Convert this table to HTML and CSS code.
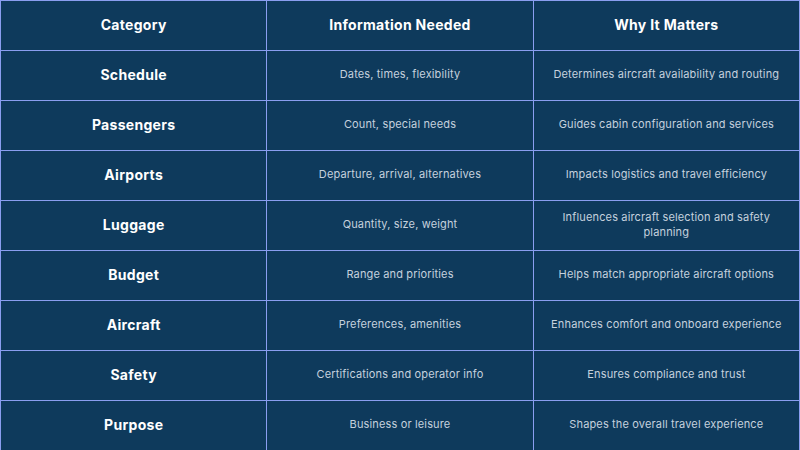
FILE: index.html
```html
<!DOCTYPE html>
<html>
<head>
<meta charset="utf-8">
<link rel="stylesheet" href="styles.css">
</head>
<body>
<table class="grid">
  <thead>
    <tr><th>Category</th><th>Information Needed</th><th>Why It Matters</th></tr>
  </thead>
  <tbody>
    <tr><th>Schedule</th><td>Dates, times, flexibility</td><td>Determines aircraft availability and routing</td></tr>
    <tr><th>Passengers</th><td>Count, special needs</td><td>Guides cabin configuration and services</td></tr>
    <tr><th>Airports</th><td>Departure, arrival, alternatives</td><td>Impacts logistics and travel efficiency</td></tr>
    <tr><th>Luggage</th><td>Quantity, size, weight</td><td>Influences aircraft selection and safety planning</td></tr>
    <tr><th>Budget</th><td>Range and priorities</td><td>Helps match appropriate aircraft options</td></tr>
    <tr><th>Aircraft</th><td>Preferences, amenities</td><td>Enhances comfort and onboard experience</td></tr>
    <tr><th>Safety</th><td>Certifications and operator info</td><td>Ensures compliance and trust</td></tr>
    <tr><th>Purpose</th><td>Business or leisure</td><td>Shapes the overall travel experience</td></tr>
  </tbody>
</table>
</body>
</html>
```
FILE: styles.css
```css
html, body {
  margin: 0;
  padding: 0;
  background: #0e3a5c;
}
.grid {
  width: 800px;
  height: 450px;
  border-collapse: collapse;
  table-layout: fixed;
  background: #0e3a5c;
  font-family: "Inter", "Open Sans", sans-serif;
}
.grid th, .grid td {
  border: 1px solid #8a9ef0;
  height: 47px;
  padding: 0 14px 2px;
  text-align: center;
  vertical-align: middle;
}
.grid th {
  color: #ffffff;
  font-weight: 700;
  font-size: 14px;
  letter-spacing: 0.3px;
}
.grid td {
  color: #c5d1de;
  font-size: 11px;
  line-height: 15px;
  letter-spacing: 0.15px;
}
```
